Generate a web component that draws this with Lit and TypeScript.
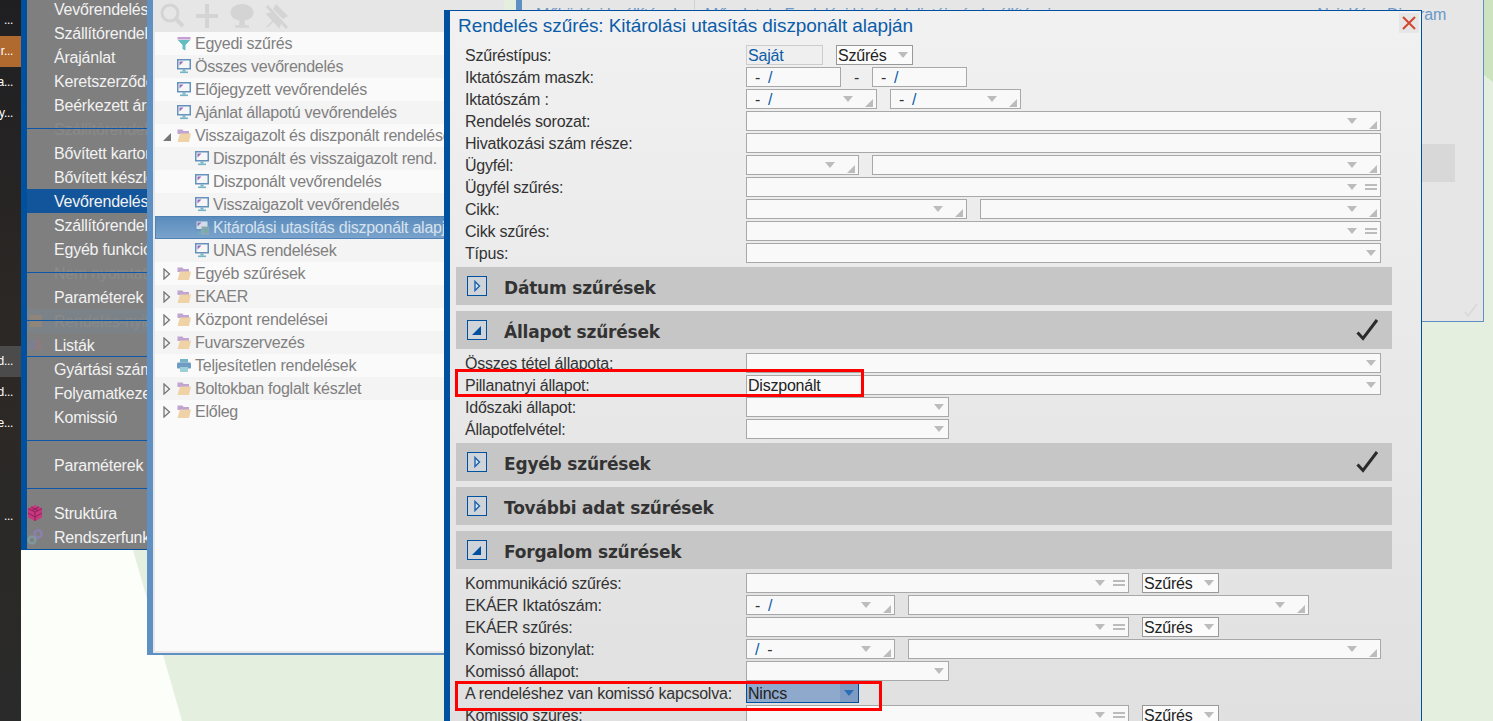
import { LitElement, html, css, svg } from "lit";
import { customElement } from "lit/decorators.js";

const monitor = (dim = false) => html`<svg class="ico ${dim ? "dim" : ""}" viewBox="0 0 14 15">
  <rect x=".75" y=".75" width="12.5" height="9" fill="#f6f6f6" stroke="#6592bd" stroke-width="1.5"/>
  <path d="M2.5 2.5h4l-4 4z" fill="#9a68bc"/>
  <rect x="5.5" y="10.5" width="3" height="2" fill="#74b4c4"/>
  <rect x="3" y="12.5" width="8" height="1.6" fill="#74b4c4"/>
  ${dim ? svg`<rect x="7" y="7" width="7" height="7" fill="#8aa8b4" stroke="#9fb39f"/><path d="M9 8.5l3 2-3 2z" fill="#6fc37a"/>` : ""}
</svg>`;
const folder = html`<svg class="ico" viewBox="0 0 14 15">
  <path d="M.5 13V1.5h5l1 1.5h5.5v3H.5z" fill="#c0a4d2"/>
  <path d="M.5 14L3 5.5h11L12 14z" fill="#efd3a6"/>
</svg>`;
const funnel = html`<svg class="ico" viewBox="0 0 14 15">
  <rect x=".5" y="1" width="13" height="2.5" fill="#c4a0d4"/>
  <path d="M.8 4h12.4L8.5 9v5.5L5.5 13V9z" fill="#62bcc0"/>
</svg>`;
const printer = html`<svg class="ico" viewBox="0 0 14 15">
  <rect x="3" y="1" width="8" height="3.5" fill="#74b4c4"/>
  <rect x="0" y="4.5" width="14" height="6" rx="1" fill="#6f9cc4"/>
  <rect x="3" y="9" width="8" height="5" fill="#9ed0da"/>
</svg>`;
const expClosed = html`<svg class="exp" viewBox="0 0 8 12"><path d="M1 1l5.5 5L1 11z" fill="#f4f4f4" stroke="#777" stroke-width="1.3"/></svg>`;
const expOpen = html`<svg class="exp" viewBox="0 0 8 12"><path d="M0 11L8 3v8z" fill="#777"/></svg>`;
const check = html`<svg class="check" viewBox="0 0 22 22"><path d="M1.5 13.5l5.5 6L21 1" fill="none" stroke="#2b2b2b" stroke-width="3"/></svg>`;

type End = "" | "a" | "ac" | "ae";
const ctl = (w: number, end: End = "", val: unknown = "") => html`<div class="ctl" style="width:${w}px">
  <span class="val">${val}</span>
  ${end ? html`<i class="arrow"></i>` : ""}
  ${end === "ac" ? html`<i class="corner"></i>` : ""}
  ${end === "ae" ? html`<i class="eq"></i>` : ""}
</div>`;
const mask = html`<span class="mask"><b>-</b><em>/</em></span>`;
const mask2 = html`<span class="mask"><em>/</em><b>-</b></span>`;
const szures = html`<div class="ctl szures"><span class="val">Szűrés</span><i class="arrow"></i></div>`;

const row = (label: string, ...c: unknown[]) => html`<div class="row"><label>${label}</label>${c}</div>`;
const bar = (title: string, open: boolean, ok = false) => html`<div class="bar">
  <span class="tog">${open
    ? html`<svg viewBox="0 0 18 18" width="18" height="18"><path d="M4 14l9-9v9z" fill="#0050a0"/></svg>`
    : html`<svg viewBox="0 0 18 18" width="18" height="18"><path d="M7 4.5l4.5 4.5-4.5 4.5z" fill="#dfe6ef" stroke="#1c62ad" stroke-width="1.4"/></svg>`}</span>
  <h3>${title}</h3>${ok ? check : ""}
</div>`;

const faintA = html`<svg class="mico" viewBox="0 0 16 16"><rect x="3" y="2" width="12" height="12" fill="#8f857a"/></svg>`;
const faintB = html`<svg class="mico" viewBox="0 0 16 16"><rect x="2" y="3" width="6" height="10" fill="#7b7f92"/><rect x="8" y="3" width="6" height="10" fill="#8c7b7f"/></svg>`;

const menu: { t?: string; sel?: boolean; ghost?: string; sep?: boolean; tint?: boolean; end?: boolean; ico?: unknown }[] = [
  { t: "Vevőrendelés" }, { t: "Szállítórendelés" }, { t: "Árajánlat" }, { t: "Keretszerződés" }, { t: "Beérkezett árajánlat" },
  { ghost: "Szállítórendelés", sep: true },
  { t: "Bővített karton" }, { t: "Bővített készlet" }, { t: "Vevőrendelés", sel: true }, { t: "Szállítórendelés" }, { t: "Egyéb funkciók" },
  { ghost: "Nem nyomtatott", sep: true },
  { t: "Paraméterek" },
  { ghost: "Rendelés-nyilv", sep: true, tint: true, ico: faintA },
  { t: "Listák", end: true, ico: faintB },
  { t: "Gyártási szám" }, { t: "Folyamatkezelés" }, { t: "Komissió" },
  { sep: true },
  { t: "Paraméterek" },
  { sep: true },
  { t: "Struktúra", ico: html`<svg class="mico" viewBox="0 0 16 16"><path d="M8 0l7 3.5v9L8 16l-7-3.5v-9z" fill="#c8387f"/><path d="M1 3.5L8 7l7-3.5M8 7v9M4 2l7 3.5M12 2L5 5.5M1 8l7 4 7-4" stroke="#8c1f58" fill="none"/></svg>` },
  { t: "Rendszerfunkciók", ico: html`<svg class="mico" viewBox="0 0 16 16"><circle cx="11" cy="5" r="3.6" fill="none" stroke="#8d7fae" stroke-width="2.4"/><circle cx="5" cy="11" r="3.4" fill="none" stroke="#7f9a9c" stroke-width="2.4"/></svg>` },
];

const tree: { t: string; lvl?: number; ico: unknown; exp?: "o" | "c"; sel?: boolean }[] = [
  { t: "Egyedi szűrés", ico: funnel },
  { t: "Összes vevőrendelés", ico: monitor() },
  { t: "Előjegyzett vevőrendelés", ico: monitor() },
  { t: "Ajánlat állapotú vevőrendelés", ico: monitor() },
  { t: "Visszaigazolt és diszponált rendelések", ico: folder, exp: "o" },
  { t: "Diszponált és visszaigazolt rend.", lvl: 1, ico: monitor() },
  { t: "Diszponált vevőrendelés", lvl: 1, ico: monitor() },
  { t: "Visszaigazolt vevőrendelés", lvl: 1, ico: monitor() },
  { t: "Kitárolási utasítás diszponált alapján", lvl: 1, ico: monitor(true), sel: true },
  { t: "UNAS rendelések", lvl: 1, ico: monitor() },
  { t: "Egyéb szűrések", ico: folder, exp: "c" },
  { t: "EKAER", ico: folder, exp: "c" },
  { t: "Központ rendelései", ico: folder, exp: "c" },
  { t: "Fuvarszervezés", ico: folder, exp: "c" },
  { t: "Teljesítetlen rendelések", ico: printer },
  { t: "Boltokban foglalt készlet", ico: folder, exp: "c" },
  { t: "Előleg", ico: folder, exp: "c" },
];

const dock = ["...", "r...", "a...", "y...", "", "", "", "", "", "", "", "d...", "d...", "e...", "", "", "..."];

@customElement("app-root")
export class AppRoot extends LitElement {
  static styles = css`
    :host { display: flex; width: 1493px; height: 721px; overflow: hidden; font-family: "Liberation Sans", Arial, sans-serif; font-size: 16px; letter-spacing: -0.22px; }
    .dock { width: 21px; flex: none; padding-top: 5px; box-sizing: border-box; background: linear-gradient(#1f1f22, #2c2825 45%, #2a2a2a); color: #fff; font-size: 12px; letter-spacing: -0.3px; }
    .dock div { height: 31px; line-height: 31px; padding-right: 8px; white-space: nowrap; overflow: hidden; display: flex; justify-content: flex-end; }
    .dock .on { background: #b0692f; }
    .dock .hl { background: #4b4b4b; }
    .desk { position: relative; flex: 1; overflow: hidden; background: #e5efe0; }
    .wall { position: absolute; left: 0; top: 0; width: 1472px; height: 721px; }

    .menu { position: absolute; left: 0; top: -3px; width: 126px; box-sizing: border-box; border-left: 6px solid #0050a0; border-bottom: 1px solid #0050a0; background: #7f7f7f; color: #f2f2f2; overflow: hidden; }
    .mrow { position: relative; height: 24px; line-height: 26px; padding-left: 27px; white-space: nowrap; }
    .mrow.sel { background: #12559b; }
    .mrow.ghost { color: #8a8a8a; }
    .mrow.tint { background: #7b8288; }
    .mrow.sep::after { content: ""; position: absolute; left: 0; right: 0; top: 11px; height: 1px; background: #0b58a8; }
    .mrow.end::after { content: ""; position: absolute; left: 0; right: 0; bottom: 0; height: 1px; background: #0b58a8; }
    .mico { position: absolute; left: 0; top: 4px; width: 16px; height: 16px; }

    .treewin { position: absolute; left: 126px; top: 0; width: 357px; height: 655px; box-sizing: border-box; border-left: 6px solid #5e90c3; border-bottom: 2px solid #5e90c3; background: #e8e8e8; padding: 0 0 2px 2px; display: flex; flex-direction: column; }
    .tools { height: 32px; flex: none; margin-left: -2px; background: #e6e6e6; display: flex; align-items: center; gap: 11px; padding-left: 7px; }
    .tools svg { width: 24px; height: 26px; }
    .tlist { flex: 1; background: #fafafa; overflow: hidden; }
    .trow { display: flex; align-items: center; height: 23px; box-sizing: border-box; color: #808080; padding-left: 8px; white-space: nowrap; letter-spacing: -0.25px; }
    .trow:nth-child(even) { background: #f4f4f4; }
    .trow.l1 { padding-left: 40px; }
    .trow.sel { background: linear-gradient(#5b8cbd, #7aa3cc); border: 1px solid #4f82b6; color: #d8e2ee; padding-left: 39px; }
    .exp { width: 8px; height: 12px; flex: none; margin-right: 6px; }
    .noexp { width: 14px; flex: none; }
    .ico { width: 14px; height: 15px; flex: none; margin-right: 4px; }
    .ico.dim { opacity: .75; }

    .bgwin { position: absolute; left: 495px; top: 0; width: 968px; height: 322px; box-sizing: border-box; border-left: 6px solid #5e90c3; border-right: 1px solid #5e90c3; border-bottom: 1px solid #5e90c3; background: #e6e6e6; color: #6a98c8; }
    .bghead { display: flex; height: 30px; line-height: 30px; white-space: nowrap; }
    .bghead .c1 { width: 173px; padding-left: 14px; box-sizing: border-box; border-right: 1px solid #d2d2d2; }
    .bghead .c2 { width: 741px; margin-left: 10px; display: flex; justify-content: space-between; }
    .panel { position: absolute; left: 899px; top: 144px; width: 34px; height: 38px; background: #d8d8d8; }
    .ghostchk { position: absolute; right: 5px; bottom: 4px; width: 14px; height: 14px; }

    .dlg { position: absolute; left: 423px; top: 10px; width: 978px; height: 720px; box-sizing: border-box; border-left: 6px solid #0050a0; border-top: 1px solid #0050a0; border-right: 1px solid #0050a0; background: linear-gradient(#f1f1f1, #e0e0e0 100%); color: #333; }
    .dlg h2 { margin: 0; height: 34px; line-height: 30px; padding-left: 8px; font-weight: normal; font-size: 19px; letter-spacing: -0.08px; color: #0b5ca8; white-space: nowrap; }
    .close { position: absolute; right: 2px; top: 2px; width: 20px; height: 20px; padding: 0; border: 0; background: #e6e6e6; display: flex; align-items: center; justify-content: center; }
    .rows { padding-left: 15px; }
    .rows.top { padding-top: 4px; }
    .row { display: flex; gap: 13px; height: 22px; box-sizing: border-box; }
    .row label { width: 268px; flex: none; line-height: 22px; white-space: nowrap; }
    .ctl { display: flex; align-items: center; flex: none; height: 20px; box-sizing: border-box; border: 1px solid #a8a8a8; background: #f9f9f9; padding: 0 3px 0 1px; }
    .val { flex: 1; white-space: nowrap; line-height: 20px; height: 18px; color: #222; }
    .arrow { width: 0; height: 0; flex: none; border-left: 5px solid transparent; border-right: 5px solid transparent; border-top: 6px solid #bcbcbc; margin-right: 1px; }
    .corner { width: 0; height: 0; flex: none; margin: 7px 0 0 11px; border-left: 8px solid transparent; border-bottom: 8px solid #bcbcbc; }
    .eq { width: 12px; height: 6px; flex: none; margin-left: 7px; border-top: 2px solid #bcbcbc; border-bottom: 2px solid #bcbcbc; box-sizing: border-box; }
    .szures { width: 77px; background: #fbfbfb; border-color: #999; }
    .own { width: 77px; background: #efefef; border-color: #ccc; }
    .own .val { color: #0b5ca8; }
    .mask { padding-left: 7px; display: inline-flex; gap: 8px; }
    .mask b { font-weight: normal; color: #333; }
    .mask em { font-style: normal; color: #0b5ca8; }
    .dash { width: 31px; margin-right: -13px; margin-left: -13px; flex: none; text-align: center; line-height: 22px; }
    .nincs { background: #8fa9cc; border-color: #0050a0; padding: 0 0 0 1px; }
    .nincs .arrowbox { width: 18px; height: 18px; background: #7e9bc4; display: flex; align-items: center; justify-content: center; }
    .nincs .arrow { border-top-color: #2a6fb5; margin: 0; }
    .bar { display: flex; align-items: center; height: 38px; margin: 2px 0 0 6px; width: 936px; background: #c6c6c6; padding: 0 14px 0 11px; box-sizing: border-box; }
    .bar + .bar { margin-top: 6px; }
    .tog { width: 20px; height: 20px; box-sizing: border-box; border: 1px solid #0050a0; background: #cfd4da; display: flex; align-items: center; justify-content: center; flex: none; }
    .bar h3 { margin: 0 0 0 17px; padding-top: 4px; font: bold 17px "DejaVu Sans", sans-serif; letter-spacing: -0.2px; color: #333; white-space: nowrap; flex: 1; }
    .check { width: 22px; height: 22px; flex: none; }
    .mark { position: absolute; left: 5px; box-sizing: border-box; border: 3px solid #f00; pointer-events: none; }
    .m1 { top: 358px; width: 409px; height: 28px; }
    .m2 { top: 670px; width: 427px; height: 30px; }
  `;

  render() {
    return html`
      <div class="dock">
        ${dock.map((d, i) => html`<div class="${i === 1 ? "on" : i === 11 ? "hl" : ""}">${d}</div>`)}
      </div>
      <div class="desk">
        <svg class="wall" viewBox="0 0 1472 721">
          <polygon points="112,550 0,550 0,721 161,721" fill="#fcfefa"/>
          <polygon points="1440,0 1472,0 1472,82 1463,75" fill="#cde3c0"/>
        </svg>

        <div class="menu">
          ${menu.map((m) => html`<div class="mrow ${m.sel ? "sel" : ""} ${m.ghost ? "ghost" : ""} ${m.sep ? "sep" : ""} ${m.tint ? "tint" : ""} ${m.end ? "end" : ""}">${m.ico ?? ""}${m.t ?? m.ghost ?? ""}</div>`)}
        </div>

        <div class="bgwin">
          <div class="bghead">
            <div class="c1">Működési beállítások</div>
            <div class="c2"><span>Műveletek: Fordulási kivételek listája és beállításai</span><span>Nyit Kész Diagram</span></div>
          </div>
          <div class="panel"></div>
          <svg class="ghostchk" viewBox="0 0 14 14"><path d="M1 9l3 4 9-12" fill="none" stroke="#d8d8d8" stroke-width="1.5"/></svg>
        </div>

        <div class="treewin">
          <div class="tools">
            <svg viewBox="0 0 24 26"><circle cx="10" cy="10" r="8" fill="none" stroke="#d4d4d4" stroke-width="3"/><path d="M16 16l7 7" stroke="#d4d4d4" stroke-width="4"/></svg>
            <svg viewBox="0 0 24 26"><path d="M12 1v24M1 13h22" stroke="#d4d4d4" stroke-width="4"/></svg>
            <svg viewBox="0 0 24 26"><ellipse cx="12" cy="9.5" rx="11.5" ry="8.5" fill="#d4d4d4"/><path d="M10 14h4l1 8h-6z" fill="#d4d4d4"/><path d="M5 23.5h14" stroke="#d4d4d4" stroke-width="2.5"/></svg>
            <svg viewBox="0 0 24 26"><path d="M2 3l20 22" stroke="#d4d4d4" stroke-width="3"/><path d="M11 1l12 12-5 3-10-10z" fill="#d4d4d4"/><path d="M2 11l12 13 2-5-9-9zM2 24l6-6" fill="#d4d4d4" stroke="#d4d4d4" stroke-width="1.5"/></svg>
          </div>
          <div class="tlist">
            ${tree.map((t) => html`<div class="trow ${t.lvl ? "l1" : ""} ${t.sel ? "sel" : ""}">
              ${t.lvl ? "" : t.exp === "o" ? expOpen : t.exp === "c" ? expClosed : html`<span class="noexp"></span>`}
              ${t.ico}${t.t}
            </div>`)}
          </div>
        </div>

        <div class="dlg">
          <h2>Rendelés szűrés: Kitárolási utasítás diszponált alapján</h2>
          <button class="close"><svg width="14" height="14" viewBox="0 0 14 14"><path d="M1 1l12 12M13 1L1 13" stroke="#d2472c" stroke-width="2"/></svg></button>
          <div class="rows">
            ${row("Szűréstípus:", html`<div class="ctl own"><span class="val">Saját</span></div>`, szures)}
            ${row("Iktatószám maszk:", ctl(95, "", mask), html`<span class="dash">-</span>`, ctl(95, "", mask))}
            ${row("Iktatószám :", ctl(131, "ac", mask), ctl(131, "ac", mask))}
            ${row("Rendelés sorozat:", ctl(635, "ac"))}
            ${row("Hivatkozási szám része:", ctl(635))}
            ${row("Ügyfél:", ctl(113, "ac"), ctl(509, "ac"))}
            ${row("Ügyfél szűrés:", ctl(635, "ae"))}
            ${row("Cikk:", ctl(221, "ac"), ctl(401, "ac"))}
            ${row("Cikk szűrés:", ctl(635, "ae"))}
            ${row("Típus:", ctl(635, "a"))}
          </div>
          ${bar("Dátum szűrések", false)}
          ${bar("Állapot szűrések", true, true)}
          <div class="rows top">
            ${row("Összes tétel állapota:", ctl(635, "a"))}
            ${row("Pillanatnyi állapot:", ctl(635, "a", "Diszponált"))}
            ${row("Időszaki állapot:", ctl(203, "a"))}
            ${row("Állapotfelvétel:", ctl(203, "a"))}
          </div>
          ${bar("Egyéb szűrések", false, true)}
          ${bar("További adat szűrések", false)}
          ${bar("Forgalom szűrések", true)}
          <div class="rows top">
            ${row("Kommunikáció szűrés:", ctl(383, "ae"), szures)}
            ${row("EKÁER Iktatószám:", ctl(149, "ac", mask), ctl(401, "ac"))}
            ${row("EKÁER szűrés:", ctl(383, "ae"), szures)}
            ${row("Komissó bizonylat:", ctl(149, "ac", mask2), ctl(473, "ac"))}
            ${row("Komissó állapot:", ctl(203, "a"))}
            ${row("A rendeléshez van komissó kapcsolva:", html`<div class="ctl nincs" style="width:113px"><span class="val">Nincs</span><span class="arrowbox"><i class="arrow"></i></span></div>`)}
            ${row("Komissió szűrés:", ctl(383, "ae"), szures)}
          </div>
          <div class="mark m1"></div>
          <div class="mark m2"></div>
        </div>
      </div>
    `;
  }
}
